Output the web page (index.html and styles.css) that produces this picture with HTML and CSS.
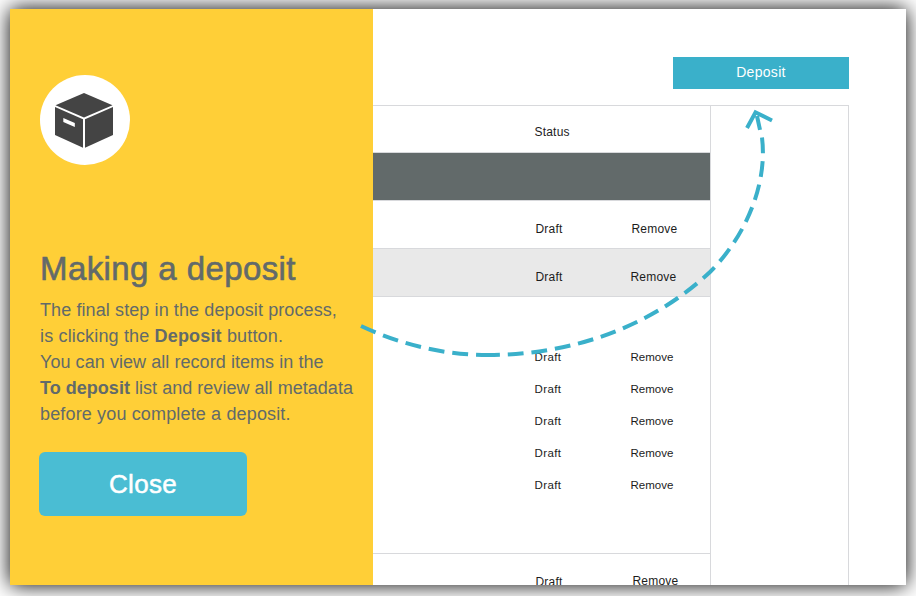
FILE: index.html
```html
<!DOCTYPE html>
<html lang="en">
<head>
<meta charset="utf-8">
<title>Making a deposit</title>
<link rel="stylesheet" href="styles.css">
</head>
<body>
<main class="dialog">
  <section class="intro">
    <div class="badge">
      <svg viewBox="0 0 90 90" width="90" height="90" aria-hidden="true">
        <path d="M15.500 30.200 44 18 72.500 30.200 44 42.500Z"/>
        <path d="M15 32 43 44.200V72.800L15 60Z"/>
        <path d="M73 32 45 44.200V72.800L73 60Z"/>
        <path class="slot" d="M23.300 43 34.800 48V52L23.300 47Z"/>
      </svg>
    </div>
    <h1>Making a deposit</h1>
    <p><span class="l1">The final step in the deposit process,</span><br><span class="l2">is clicking the <b>Deposit</b> button.</span><br><span class="l3">You can view all record items in the</span><br><span class="l4"><b>To deposit</b> list and review all metadata</span><br><span class="l5">before you complete a deposit.</span></p>
    <button class="close">Close</button>
  </section>
  <section class="preview">
    <button class="deposit">Deposit</button>
    <div class="board">
      <div class="table">
        <div class="row head"><span class="status">Status</span></div>
        <div class="row dark"></div>
        <div class="row"><span>Draft</span><span>Remove</span></div>
        <div class="row shaded"><span>Draft</span><span>Remove</span></div>
        <div class="items">
          <div class="item"><span>Draft</span><span>Remove</span></div>
          <div class="item"><span>Draft</span><span>Remove</span></div>
          <div class="item"><span>Draft</span><span>Remove</span></div>
          <div class="item"><span>Draft</span><span>Remove</span></div>
          <div class="item"><span>Draft</span><span>Remove</span></div>
        </div>
        <div class="row last"><span>Draft</span><span class="raised">Remove</span></div>
      </div>
      <div class="side"></div>
    </div>
  </section>
  <svg class="arrow" viewBox="10 9 896 576" width="896" height="576" aria-hidden="true">
    <path class="dash" pathLength="132" d="M488 355C444 355 402 345 361 326"/>
    <path class="dash" pathLength="396" d="M488 355C570 355 650 328 710 272C744 238 768 186 762 137.500"/>
    <path d="M760 129.800 757 116M747 128 755.500 112.300 772 120.500"/>
  </svg>
</main>
</body>
</html>
```
FILE: styles.css
```css
* { box-sizing: border-box; }
body {
  margin: 0;
  padding: 9px 10px 11px;
  height: 596px;
  overflow: hidden;
  background: #fff;
  font-family: "Liberation Sans", Arial, sans-serif;
}
.dialog {
  position: relative;
  display: flex;
  height: 576px;
  background: #fff;
  box-shadow: 0 0 20px #000;
}
.intro {
  width: 363px;
  padding: 66px 0 0 30px;
  background: #ffcf37;
  color: #626a6a;
}
.badge {
  width: 90px;
  height: 90px;
  border-radius: 50%;
  background: #fff;
}
.badge svg { display: block; fill: #444; }
.badge .slot { fill: #fff; }
h1 {
  margin: 85px 0 0;
  font-size: 33px;
  line-height: 38px;
  font-weight: 400;
  letter-spacing: .4px;
  white-space: nowrap;
  -webkit-text-stroke: .6px #626a6a;
}
p {
  margin: 9px 0 0;
  font-size: 18px;
  line-height: 26px;
  letter-spacing: .1px;
  white-space: nowrap;
}
.l2 { letter-spacing: .16px; }
.l3 { letter-spacing: .06px; }
.l4 { letter-spacing: .03px; }
.l5 { letter-spacing: .15px; }
.close, .deposit {
  display: block;
  border: 0;
  padding: 0;
  color: #fff;
  font-family: inherit;
}
.close {
  width: 208px;
  height: 64px;
  margin: 25px 0 0 -1px;
  border-radius: 6px;
  background: #4abdd3;
  font-size: 26px;
  letter-spacing: .3px;
  -webkit-text-stroke: .5px #fff;
}
.preview {
  flex: 1;
  display: flex;
  flex-direction: column;
  padding: 48px 57px 0 0;
  overflow: hidden;
}
.deposit {
  flex: none;
  align-self: flex-end;
  width: 176px;
  height: 32px;
  padding-bottom: 2px;
  background: #3ab0ca;
  font-size: 14px;
  letter-spacing: .3px;
}
.board {
  flex: 1;
  display: flex;
  min-height: 0;
  margin-top: 16px;
  border: solid #d8d9dc;
  border-width: 1px 1px 0 0;
}
.table {
  width: 338px;
  border-right: 1px solid #d8d9dc;
  font-size: 12px;
  color: #1c1c1c;
}
.row, .item {
  display: grid;
  grid-template-columns: 96px 1fr;
  padding-left: 162.500px;
}
.row {
  height: 48px;
  line-height: 14px;
  padding-top: 21px;
  letter-spacing: .2px;
  border-bottom: 1px solid #d8d9dc;
}
.head { height: 47px; padding: 19px 0 0 161.500px; }
.dark { background: #626a6a; }
.shaded { background: #e9e9e9; grid-template-columns: 95px 1fr; }
.items {
  height: 257px;
  padding-top: 44px;
  border-bottom: 1px solid #d8d9dc;
  font-size: 11.500px;
}
.item {
  height: 32px;
  padding-left: 161.500px;
  line-height: 32px;
}
.item span:first-child { letter-spacing: .4px; }
.last { border: 0; height: 31px; grid-template-columns: 97px 1fr; }
.raised { margin-top: -1px; }
.side { flex: 1; }
.arrow {
  position: absolute;
  inset: 0;
  fill: none;
  stroke: #3ab0ca;
  stroke-width: 4;
}
.dash { stroke-dasharray: 16 8; stroke-dashoffset: 4; }
```
